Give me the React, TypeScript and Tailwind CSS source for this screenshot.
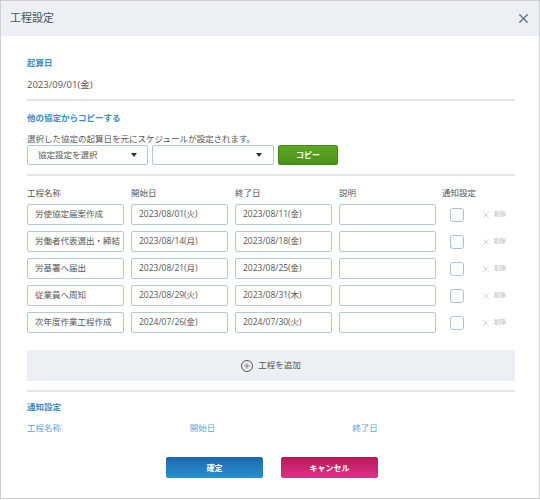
import { X, Plus } from "lucide-react";

const rows = [
  { name: "労使協定届案作成", start: "2023/08/01(火)", end: "2023/08/11(金)" },
  { name: "労働者代表選出・締結", start: "2023/08/14(月)", end: "2023/08/18(金)" },
  { name: "労基署へ届出", start: "2023/08/21(月)", end: "2023/08/25(金)" },
  { name: "従業員へ周知", start: "2023/08/29(火)", end: "2023/08/31(木)" },
  { name: "次年度作業工程作成", start: "2024/07/26(金)", end: "2024/07/30(火)" },
];

const inputCls =
  "w-[97px] h-[21px] border border-[#b3c8da] rounded-[2px] bg-white px-[7px] flex items-center text-[8.5px] text-[#555] whitespace-nowrap overflow-hidden";

const Caret = () => (
  <span className="w-0 h-0 border-l-[3.5px] border-r-[3.5px] border-t-[4px] border-l-transparent border-r-transparent border-t-[#333]" />
);

const SectionLabel = ({ children, className = "" }: { children: string; className?: string }) => (
  <div className={`text-[8.5px] leading-[12px] font-bold text-[#3a8cc7] ${className}`}>{children}</div>
);

export default function App() {
  return (
    <div
      className="w-[540px] h-[499px] border border-[#cfcfcf] bg-white flex flex-col"
      style={{ fontFamily: '"Open Sans", "Noto Sans CJK JP", sans-serif' }}
    >
      <header className="h-[35px] shrink-0 bg-[#ecf0f4] flex items-center justify-between pl-[9px] pr-[8px]">
        <h1 className="text-[11px] text-[#46525e]">工程設定</h1>
        <X className="w-[15px] h-[15px] text-[#5d7082]" strokeWidth={2} />
      </header>

      <section className="pl-[26px] pr-[24px] flex flex-col">
        <SectionLabel className="mt-[21px]">起算日</SectionLabel>
        <div className="mt-[10px] text-[9.5px] leading-[12px] text-[#555]">2023/09/01(金)</div>

        <div className="mt-[8px] h-[2px] bg-[#e6e6e6]" />

        <SectionLabel className="mt-[11px]">他の協定からコピーする</SectionLabel>
        <div className="mt-[9px] text-[8.5px] leading-[12px] text-[#555]">
          選択した協定の起算日を元にスケジュールが設定されます。
        </div>
        <div className="flex gap-[4px] h-[20px]">
          <div className="w-[121px] border border-[#b3c8da] rounded-[2px] flex items-center justify-between pl-[10px] pr-[10px] text-[8.5px] text-[#555]">
            <span>協定設定を選択</span>
            <Caret />
          </div>
          <div className="w-[122px] border border-[#b3c8da] rounded-[2px] flex items-center justify-end pr-[11px]">
            <Caret />
          </div>
          <button className="w-[60px] rounded-[2px] border border-[#3f8a16] bg-gradient-to-b from-[#5fa826] to-[#4a9318] text-white text-[8px] font-bold">
            コピー
          </button>
        </div>

        <div className="mt-[9px] h-[2px] bg-[#e6e6e6]" />

        <div className="mt-[11px] flex text-[8.5px] leading-[12px] text-[#555]">
          <span className="w-[104px]">工程名称</span>
          <span className="w-[104px]">開始日</span>
          <span className="w-[104px]">終了日</span>
          <span className="w-[103px]">説明</span>
          <span>通知設定</span>
        </div>

        <div className="mt-[5px] flex flex-col gap-[6px]">
          {rows.map((r) => (
            <div key={r.name} className="flex items-center gap-[7px]">
              <div className={inputCls}>{r.name}</div>
              <div className={inputCls}>{r.start}</div>
              <div className={inputCls}>{r.end}</div>
              <div className={inputCls} />
              <div className="ml-[7px] w-[14px] h-[14px] border border-[#a9c1d6] rounded-[3px] bg-white" />
              <div className="ml-[10px] flex items-center gap-[3px] text-[#b9b9b9]">
                <X className="w-[10px] h-[10px]" strokeWidth={1.4} />
                <span className="text-[6px]">削除</span>
              </div>
            </div>
          ))}
        </div>

        <button className="mt-[17px] h-[31px] bg-[#ecf0f4] flex items-center justify-center gap-[5px] text-[8.5px] text-[#555]">
          <span className="w-[12px] h-[12px] rounded-full border border-[#555] flex items-center justify-center">
            <Plus className="w-[8px] h-[8px]" strokeWidth={2} />
          </span>
          工程を追加
        </button>

        <div className="mt-[9px] h-[2px] bg-[#e6e6e6]" />

        <SectionLabel className="mt-[9px]">通知設定</SectionLabel>
        <div className="mt-[9px] grid grid-cols-3 text-[8.5px] leading-[12px] text-[#5aa6d8]">
          <span>工程名称</span>
          <span>開始日</span>
          <span>終了日</span>
        </div>

        <div className="mt-[23px] flex justify-center gap-[18px] pl-[2px]">
          <button className="w-[97px] h-[21px] rounded-[2px] bg-gradient-to-b from-[#1b66ac] to-[#2a92d0] text-white text-[8px] font-bold">
            確定
          </button>
          <button className="w-[97px] h-[21px] rounded-[2px] bg-gradient-to-b from-[#bb1654] to-[#d8338c] text-white text-[8px] font-bold">
            キャンセル
          </button>
        </div>
      </section>
    </div>
  );
}
